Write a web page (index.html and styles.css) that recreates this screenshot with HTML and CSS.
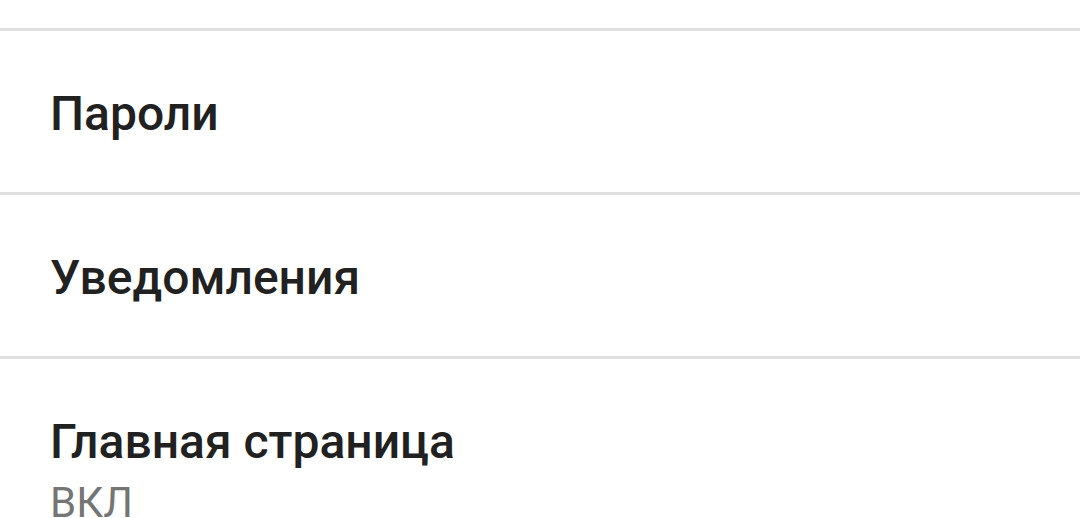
FILE: index.html
```html
<!DOCTYPE html>
<html lang="ru">
<head>
<meta charset="utf-8">
<link rel="stylesheet" href="styles.css">
</head>
<body>
<div class="list">
  <div class="item item-cut"></div>
  <div class="item"><div class="title">Пароли</div></div>
  <div class="item"><div class="title">Уведомления</div></div>
  <div class="item item-last">
    <div class="title">Главная страница</div>
    <div class="summary">ВКЛ</div>
  </div>
</div>
</body>
</html>
```
FILE: styles.css
```css
html, body {
  margin: 0;
  padding: 0;
  background: #ffffff;
  overflow: hidden;
}
.list {
  display: flex;
  flex-direction: column;
  font-family: Roboto, "Noto Sans", sans-serif;
}
.item {
  box-sizing: border-box;
  height: 164px;
  padding: 54.5px 50px 0;
  border-bottom: 3px solid #e0e0e0;
}
.item-cut {
  height: 31px;
  padding: 0;
}
.item-last {
  border-bottom: none;
  height: auto;
}
.title {
  font-size: 48px;
  font-weight: 500;
  line-height: 56px;
  color: #212121;
}
.summary {
  font-size: 42px;
  font-weight: 400;
  line-height: 66px;
  color: #757575;
}
```
